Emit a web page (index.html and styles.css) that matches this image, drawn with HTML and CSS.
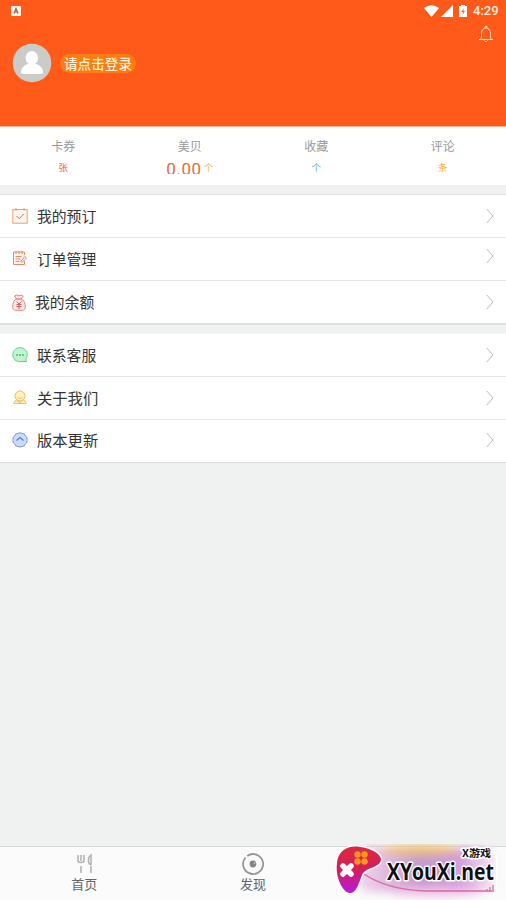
FILE: index.html
```html
<!DOCTYPE html>
<html lang="zh-CN">
<head>
<meta charset="utf-8">
<title>个人中心</title>
<link rel="stylesheet" href="styles.css">
</head>
<body>
<div class="app">
  <header class="hero">
    <div class="status">
      <svg class="status-app" width="10" height="10" viewBox="0 0 10 10"><rect width="10" height="10" rx="1" fill="#fff4e9"/><path d="M3 7.5 5 2.5l2 5M3.7 6h2.6" fill="none" stroke="#8c6552" stroke-width="1.2"/></svg>
      <svg class="wifi" width="15" height="12" viewBox="0 0 15 12"><path d="M0 3Q7.500-2.500 15 3L7.500 12Z" fill="#fff"/></svg>
      <svg class="signal" width="12" height="12" viewBox="0 0 12 12"><path d="M12 0v12H0Z" fill="#fff"/></svg>
      <svg class="battery" width="8" height="12" viewBox="0 0 8 12"><path d="M0 1h2V0h4v1h2v11H0Z" fill="#fff"/><path d="M4.800 3 2.300 7H4l-.6 3L6 6H4.300Z" fill="#f06a38"/></svg>
      <span class="time">4:29</span>
    </div>
    <div class="notice">
      <svg width="16" height="18" viewBox="0 0 16 18" fill="none" stroke="#ffe0b8" stroke-width="1"><path d="M1 14.500h14M2.800 14.500c.7-1 .7-3 .7-6C3.500 5 5.300 3 8 3s4.500 2 4.500 5.500c0 3 0 5 .8 6M7 3V1.500h2V3M6.300 15c.2 2 3.200 2 3.400 0"/></svg>
    </div>
    <div class="user">
      <svg width="40" height="40" viewBox="0 0 40 40"><circle cx="20" cy="20" r="19.300" fill="#cbcbc8"/><ellipse cx="19.800" cy="15" rx="6.200" ry="7" fill="#fff"/><path d="M9 29.500c0-5 3-7 7-8.500h8c4 1.500 7 3.500 7 8.500q0 1.500-2 1.500H11q-2 0-2-1.500Z" fill="#fff"/></svg>
      <a class="login">请点击登录</a>
    </div>
  </header>

  <section class="stats">
    <div class="stat"><span class="name">卡券</span><span class="value red">张</span></div>
    <div class="stat"><span class="name">美贝</span><span class="value gold"><b class="amount">0.00</b>个</span></div>
    <div class="stat"><span class="name">收藏</span><span class="value blue">个</span></div>
    <div class="stat"><span class="name">评论</span><span class="value amber">条</span></div>
  </section>

  <nav class="menu">
    <a class="row">
      <svg class="icon" width="16" height="16" viewBox="0 0 16 16" fill="#fff6ef" stroke="#ee9a75"><path d="M.8 1.500h14.400v13.700H.8Z"/><path d="M4 0v3M12 0v3" /><path d="m4.500 8 2.700 2.700L12 5.800" fill="none" stroke="#e66c48"/></svg>
      <span class="label">我的预订</span>
      <svg class="arrow" width="8" height="16" viewBox="0 0 8 16"><path d="m.8 1 6.200 7L.8 15"/></svg>
    </a>
    <a class="row raised">
      <svg class="icon" width="16" height="16" viewBox="0 0 16 16" fill="none" stroke="#e78a68"><path d="M12.500 5V2H1.500v12.500h11V11" fill="#fff3eb"/><path d="M4 1v3M7 1v3M10 1v3M3.500 6.500h6M3.500 9h5M3.500 11.500h4M9 11l4-4.500 1.500 1.500-4 4H9Z"/></svg>
      <span class="label">订单管理</span>
      <svg class="arrow" width="8" height="16" viewBox="0 0 8 16"><path d="m.8 1 6.200 7L.8 15"/></svg>
    </a>
    <a class="row">
      <svg class="icon" width="14" height="17" viewBox="0 0 14 17" fill="#ffebe7" stroke="#e78078"><path d="m4.500 5-2-3 2.300-1 2 .8L9 1l2.200 1L9 5c2.800.8 4.300 4 4.300 8 0 2.300-1.300 3.300-3 3.300H3.700c-1.700 0-3-1-3-3.300 0-4 1.300-7.200 3.800-8Z"/><path d="M4.500 5H9M4.500 7.500 7 10l2.500-2.500M7 10v5M4.500 10.500h5M4.500 12.500h5" stroke="#df5656"/></svg>
      <span class="label">我的余额</span>
      <svg class="arrow" width="8" height="16" viewBox="0 0 8 16"><path d="m.8 1 6.200 7L.8 15"/></svg>
    </a>
  </nav>

  <nav class="menu second">
    <a class="row">
      <svg class="icon" width="16" height="16" viewBox="0 0 16 16"><path d="M14.500 14.500h-6C4 15 .8 12 .8 8a7.200 7.200 0 1 1 13 4Z" fill="#bff5cd" stroke="#6bce88"/><path d="M4 8h2M7 8h2M10 8h2" stroke="#4fb873" stroke-width="1.500"/></svg>
      <span class="label">联系客服</span>
      <svg class="arrow" width="8" height="16" viewBox="0 0 8 16"><path d="m.8 1 6.200 7L.8 15"/></svg>
    </a>
    <a class="row">
      <svg class="icon" width="16" height="16" viewBox="0 0 16 16" fill="#fff0c2" stroke="#efbc59"><path d="M2 13.500c0-2 1.500-3.500 4-4h4c2.500.5 4 2 4 4Z"/><circle cx="8" cy="6" r="5"/><path d="M5.500 7c1.500 2 3.500 2 5 0M5 11l5 2.500" fill="none"/></svg>
      <span class="label">关于我们</span>
      <svg class="arrow" width="8" height="16" viewBox="0 0 8 16"><path d="m.8 1 6.200 7L.8 15"/></svg>
    </a>
    <a class="row">
      <svg class="icon" width="16" height="16" viewBox="0 0 16 16"><path d="M4 1.800 8 .8l4 1 3 4.200v4l-3 4-4 1-4-1-3-4V6Z" fill="#c8dcff" stroke="#819bc9"/><path d="m4.500 8.500 3.500-3 3.500 3" fill="none" stroke="#5e7fbd" stroke-width="1.300"/></svg>
      <span class="label">版本更新</span>
      <svg class="arrow" width="8" height="16" viewBox="0 0 8 16"><path d="m.8 1 6.200 7L.8 15"/></svg>
    </a>
  </nav>

  <footer class="tabs">
    <a class="tab">
      <svg width="22" height="22" viewBox="0 0 22 22" fill="none" stroke="#b0b0b0" stroke-width="1.500"><path d="M5 2v6q0 1.500 3 1.500T11 8V2M8 2v6M8 13v7M18 20v-7M18 12V2q-3 2-2.500 7 0 2 2.500 3"/></svg>
      <span>首页</span>
    </a>
    <a class="tab">
      <svg width="22" height="22" viewBox="0 0 22 22"><path d="M5.200 3A10 10 0 0 1 11 1a10 10 0 1 1-7.500 3.500" fill="none" stroke="#969696" stroke-width="1.800"/><circle cx="11" cy="11" r="3.400" fill="#858585"/><circle cx="12.500" cy="10" r=".8" fill="#ddd"/></svg>
      <span>发现</span>
    </a>
    <div class="tab"></div>
  </footer>

  <div class="watermark">
    <svg width="176" height="60" viewBox="0 0 176 60">
      <defs>
        <linearGradient id="pad" x2="0" y2="1"><stop stop-color="#dd2940"/><stop offset=".5" stop-color="#d51d5b"/><stop offset="1" stop-color="#b51be0"/></linearGradient>
        <linearGradient id="haze"><stop stop-color="#e5a5da" stop-opacity=".45"/><stop offset=".45" stop-color="#c49acb"/><stop offset=".75" stop-color="#d29cdd"/><stop offset="1" stop-color="#efc4eb" stop-opacity=".5"/></linearGradient>
        <filter id="soft" x="-20%" y="-40%" width="140%" height="180%"><feGaussianBlur stdDeviation="4"/></filter>
      </defs>
      <g filter="url(#soft)"><rect x="28" y="3" width="136" height="45" rx="12" fill="url(#haze)"/><ellipse cx="91" cy="6" rx="40" ry="5" fill="#edc06f"/><ellipse cx="105" cy="48" rx="45" ry="5" fill="#f0c3ec"/></g>
      <path d="M130 6h27q10 0 10 9v31" fill="none" stroke="#fff" stroke-width="1.500"/>
      <path d="M34 30c16 11 36 16 61 17h67" fill="none" stroke="#d96a9d" stroke-width="1.500"/>
      <path d="M157 48v-3M160 48v-5M163 48v-7" stroke="#d87bae" stroke-width="1.500"/>
      <path d="M7 20C8 7 19 2 30 4c10 1 20 6 21 12 0 9-16 8-19 16-3 7-5 17-11 18C13 51 5 34 7 20Z" transform="translate(0 -1)" fill="url(#pad)" stroke="#fff" stroke-width="3" paint-order="stroke" stroke-linejoin="round"/>
      <g fill="#ff981c"><circle cx="27.500" cy="10.500" r="3.200"/><circle cx="34.500" cy="10.500" r="3.200"/><circle cx="27.500" cy="17.500" r="3.200"/><circle cx="34.500" cy="17.500" r="3.200"/></g>
      <path d="m13 22 8 8M21 22l-8 8" stroke="#fff" stroke-width="5.500" stroke-linecap="round"/>
      <text class="brand-small" x="132" y="12.500" textLength="29" lengthAdjust="spacingAndGlyphs">X游戏</text>
      <text class="brand" x="57" y="36" textLength="107" lengthAdjust="spacingAndGlyphs">XYouXi.net</text>
    </svg>
  </div>
</div>
</body>
</html>
```
FILE: styles.css
```css
* { box-sizing: border-box; }
body { margin: 0; background: #f0f2f1; font-family: "Noto Sans CJK SC", sans-serif; }
svg { display: block; flex-shrink: 0; }
.app { position: relative; width: 506px; height: 900px; display: flex; flex-direction: column; overflow: hidden; background: #f0f2f1; }
.hero { height: 126px; background: #ff5a19; flex-shrink: 0; }
.status { height: 22px; padding: 0 7px 0 11px; display: flex; align-items: center; }
.status-app { margin-right: auto; }
.wifi { margin-right: 2px; }
.signal { margin-right: 6px; }
.battery { margin-right: 6px; }
.time { width: 26px; font: 500 13px/22px Roboto, sans-serif; color: #fff1df; white-space: nowrap; }
.notice { height: 20px; padding: 3px 12px 0 0; display: flex; justify-content: flex-end; }
.user { display: flex; align-items: center; padding: 1px 0 0 12px; gap: 8px; }
.login { height: 19px; width: 76px; border-radius: 10px; background: #ff7c12; color: #fff2d8; font-size: 13.6px; font-weight: 500; line-height: 18px; text-align: center; white-space: nowrap; }
.stats { height: 59px; display: grid; grid-template-columns: repeat(4, 1fr); background: #fff; border-top: 1px solid #f8b594; padding-top: 10px; flex-shrink: 0; }
.stat { display: flex; flex-direction: column; align-items: center; }
.name { font-size: 12px; line-height: 18px; color: #999; }
.value { height: 20px; font-size: 9.5px; line-height: 25px; display: flex; }
.amount { height: 19px; overflow: hidden; font: 400 17px/28px Roboto, sans-serif; letter-spacing: .6px; color: #e46c36; margin-right: 2px; }
.red { color: #ee6840; }
.gold { color: #e4b750; }
.blue { color: #55a9d8; }
.amber { color: #f0ae38; }
.menu { margin-top: 9px; background: #fff; border-top: 1px solid #dedede; border-bottom: 2px solid #dcdfde; flex-shrink: 0; }
.second { margin-top: 8px; border-top-color: #f4f5f4; border-bottom-width: 1px; }
.row { height: 43px; padding: 0 12px; display: flex; align-items: center; border-bottom: 1px solid #e7e7e7; color: #333; font-size: 14.8px; }
.row:last-child { border-bottom: 0; height: 42px; }
.label { padding-bottom: 2px; }
.icon { margin-right: 9px; }
.arrow { margin-left: auto; fill: none; stroke: #bbb; stroke-width: 1; }
.raised .icon { margin-bottom: 2px; }
.raised .arrow { margin-bottom: 7px; }
.second .row { font-size: 15.3px; }
.second .row:first-child { font-size: 14.8px; }
.second .row:last-child { padding-bottom: 2px; }
.tabs { margin-top: auto; height: 54px; display: grid; grid-template-columns: repeat(3, 1fr); background: #fbfbfb; border-top: 1px solid #d9dbda; flex-shrink: 0; }
.tab { display: flex; flex-direction: column; align-items: center; padding-top: 6px; color: #666; font-size: 13px; line-height: 18px; }
.watermark { position: absolute; right: 0; bottom: 0; width: 176px; height: 56px; overflow: hidden; }
.brand, .brand-small { fill: #111; stroke: #fff; stroke-width: 3px; paint-order: stroke; stroke-linejoin: round; font-weight: 700; }
.brand { font-family: "Open Sans", sans-serif; font-size: 23px; }
.brand-small { font-family: "Noto Sans CJK SC", sans-serif; font-size: 10.5px; }
```
